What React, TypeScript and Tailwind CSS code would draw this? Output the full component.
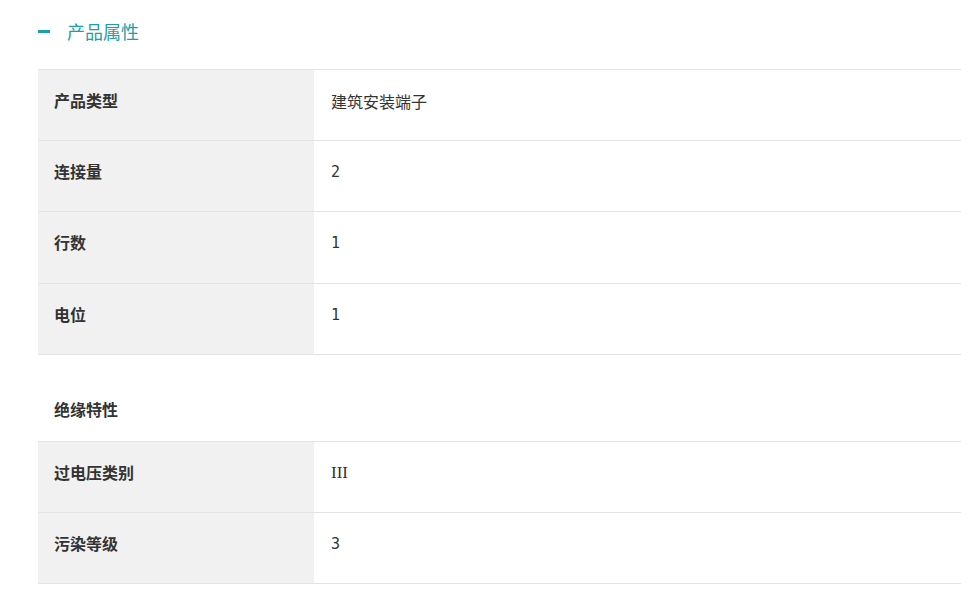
import React from 'react';

type Row = { label: string; value?: string; section?: boolean };

const rows: Row[] = [
    { label: '产品类型', value: '建筑安装端子' },
    { label: '连接量', value: '2' },
    { label: '行数', value: '1' },
    { label: '电位', value: '1' },
    { label: '绝缘特性', section: true },
    { label: '过电压类别', value: 'III' },
    { label: '污染等级', value: '3' },
];

const cjk = "font-['Noto_Sans_CJK_SC',sans-serif]";

// values are rendered in different fallback faces in the original
const valueClass = (v: string) => {
    if (/^[0-9]+$/.test(v)) return "font-['DejaVu_Sans_Mono',monospace] text-[15px]";
    if (/^[A-Z]+$/.test(v)) return "font-['Liberation_Serif',serif] text-[17px]";
    return 'text-[16px]';
};

export default function App() {
    return (
        <div className={`min-h-[597px] bg-white pl-[38px] pr-[15px] ${cjk}`}>
            {/* Header */}
            <div className="flex h-[69px] items-start pt-[18px]">
                <span className="mt-[12px] h-[3px] w-[12px] bg-[#1aa0a8]" />
                <h2 className="ml-[17px] text-[18px] leading-[26px] text-[#1aa0a8]">产品属性</h2>
            </div>

            {/* Table */}
            <div className="border-t border-[#e4e4e8]">
                {rows.map((row) =>
                    row.section ? (
                        <div key={row.label} className="border-b border-[#e4e4e8]">
                            <div className="pl-4 pt-[44px] pb-[22px] text-[16px] font-bold leading-[20px] text-[#333]">
                                {row.label}
                            </div>
                        </div>
                    ) : (
                        <div key={row.label} className="flex h-[71.2px] border-b border-[#e4e4e8]">
                            <div className="w-[276px] shrink-0 bg-[#f1f1f1] pl-4 pt-[20px] text-[16px] font-bold leading-[20px] text-[#333]">
                                {row.label}
                            </div>
                            <div className={`flex-1 pl-[17px] pt-[21px] leading-[20px] text-[#333] ${valueClass(row.value ?? '')}`}>
                                {row.value}
                            </div>
                        </div>
                    )
                )}
            </div>
        </div>
    );
}
